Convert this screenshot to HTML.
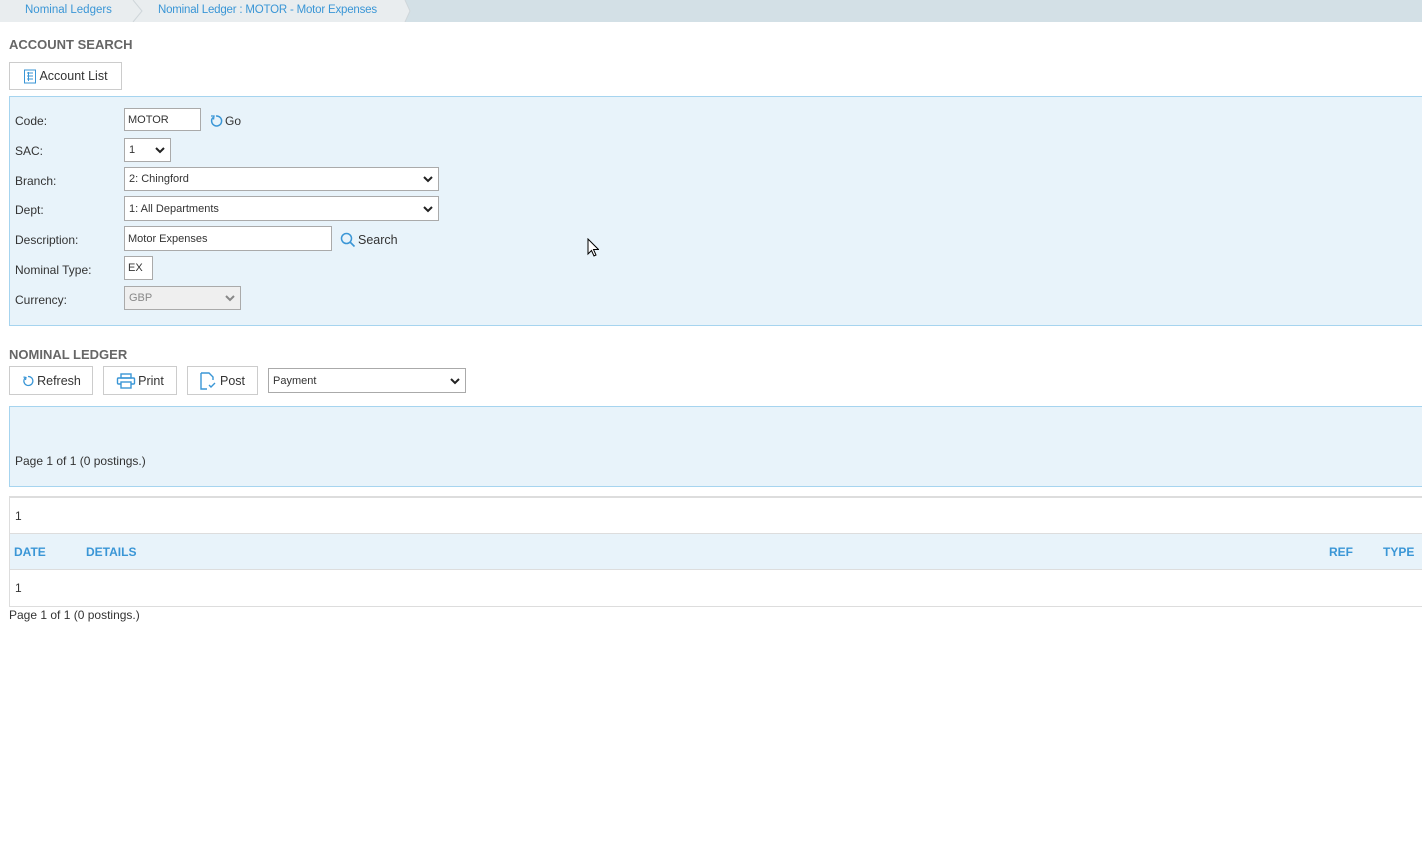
<!DOCTYPE html>
<html><head><style>
*{box-sizing:border-box;margin:0;padding:0}
body{width:1422px;height:851px;background:#fff;font-family:"Liberation Sans",sans-serif;color:#333;position:relative;overflow:hidden}
.a{position:absolute}
.lbl{font-size:12px;color:#333;left:15px}
.inp{position:absolute;background:#fff;border:1px solid #aaa;font-size:11px;padding-left:3px;display:flex;align-items:center;color:#333}
.sel{padding-left:4px}
.sel svg{position:absolute;right:5px;top:50%;margin-top:-4px}
.btn{position:absolute;background:#fff;border:1px solid #ccc;font-size:12.5px;color:#333;display:flex;align-items:center;justify-content:center;gap:2px}
.h{font-size:13px;font-weight:bold;color:#666;left:9px}
</style></head><body>
<div class="a" style="left:0;top:0;width:1422px;height:22px;background:#d3e0e6"></div>
<div class="a" style="left:0;top:0;width:405px;height:22px;background:#e9edef"></div>
<svg class="a" style="left:130px;top:0" width="16" height="22"><path d="M3 0 L12 11 L3 22" fill="none" stroke="#cfd6da" stroke-width="1"/></svg>
<svg class="a" style="left:398px;top:0" width="14" height="22"><path d="M0 0 L7 0 L12 11 L7 22 L0 22Z" fill="#e9edef"/><path d="M7 0 L12 11 L7 22" fill="none" stroke="#cfd6da"/></svg>
<div class="a" style="left:25px;top:4px;font-size:11.5px;color:#3a96d6">Nominal Ledgers</div>
<div class="a" style="left:158px;top:4px;font-size:11.5px;letter-spacing:-0.2px;color:#3a96d6">Nominal Ledger : MOTOR - Motor Expenses</div>

<div class="a h" style="top:37px">ACCOUNT SEARCH</div>
<div class="btn" style="left:9px;top:62px;width:113px;height:28px"><svg width="14" height="15" viewBox="0 0 14 15"><rect x="1.5" y="1" width="11" height="13" fill="#fff" stroke="#3a96d6"/><path d="M4 4h6M4 7h6M4 10h6M5.5 3v9" stroke="#3a96d6" fill="none"/></svg> Account List</div>

<div class="a" style="left:9px;top:96px;width:1420px;height:230px;background:#e8f3fa;border:1px solid #a6d4ef"></div>
<div class="a lbl" style="top:114px">Code:</div>
<div class="a lbl" style="top:144px">SAC:</div>
<div class="a lbl" style="top:174px">Branch:</div>
<div class="a lbl" style="top:203px">Dept:</div>
<div class="a lbl" style="top:233px">Description:</div>
<div class="a lbl" style="top:263px">Nominal Type:</div>
<div class="a lbl" style="top:293px">Currency:</div>
<div class="inp" style="left:124px;top:108px;width:77px;height:23px">MOTOR</div>
<svg class="a" style="left:209px;top:114px" width="14" height="14" viewBox="0 0 14 14"><path d="M4 3.5 A5 5 0 1 0 7 2" fill="none" stroke="#3a96d6" stroke-width="1.5"/><path d="M2 2 L5 2 L4.5 5.5" fill="none" stroke="#3a96d6" stroke-width="1.3"/></svg>
<div class="a" style="left:225px;top:114px;font-size:12px">Go</div>
<div class="inp sel" style="left:124px;top:138px;width:47px;height:24px">1<svg width="10" height="8"><path d="M1 2l4 4 4-4" stroke="#222" stroke-width="2" fill="none"/></svg></div>
<div class="inp sel" style="left:124px;top:167px;width:315px;height:24px">2: Chingford<svg width="10" height="8"><path d="M1 2l4 4 4-4" stroke="#222" stroke-width="2" fill="none"/></svg></div>
<div class="inp sel" style="left:124px;top:196px;width:315px;height:25px">1: All Departments<svg width="10" height="8"><path d="M1 2l4 4 4-4" stroke="#222" stroke-width="2" fill="none"/></svg></div>
<div class="inp" style="left:124px;top:226px;width:208px;height:25px">Motor Expenses</div>
<svg class="a" style="left:340px;top:232px" width="16" height="16"><circle cx="6.5" cy="6.5" r="5" fill="none" stroke="#3a96d6" stroke-width="1.5"/><path d="M10 10l4.5 4.5" stroke="#3a96d6" stroke-width="1.6"/></svg>
<div class="a" style="left:358px;top:233px;font-size:12.5px">Search</div>
<div class="inp" style="left:124px;top:256px;width:29px;height:24px">EX</div>
<div class="inp sel" style="left:124px;top:286px;width:117px;height:24px;background:#efefef;color:#888">GBP<svg width="10" height="8"><path d="M1 2l4 4 4-4" stroke="#888" stroke-width="2" fill="none"/></svg></div>
<svg class="a" style="left:587px;top:238px" width="12" height="20"><path d="M1 1v15l3.5-3.5 2.5 5.5 2-1-2.5-5.5h5z" fill="#fff" stroke="#000"/></svg>

<div class="a h" style="top:347px">NOMINAL LEDGER</div>
<div class="btn" style="left:9px;top:366px;width:84px;height:29px"><svg width="14" height="14" viewBox="0 0 14 14"><path d="M4 4 A4.5 4.5 0 1 0 7 2.5" fill="none" stroke="#3a96d6" stroke-width="1.3"/><path d="M2.5 3L5 3.5 4.5 6" fill="none" stroke="#3a96d6" stroke-width="1.2"/></svg>Refresh</div>
<div class="btn" style="left:103px;top:366px;width:74px;height:29px"><svg width="20" height="16" viewBox="0 0 20 16"><rect x="5" y="1" width="10" height="4" fill="none" stroke="#3a96d6" stroke-width="1.4"/><rect x="1.5" y="5" width="17" height="6" rx="1" fill="none" stroke="#3a96d6" stroke-width="1.4"/><rect x="5" y="9" width="10" height="6" fill="#fff" stroke="#3a96d6" stroke-width="1.4"/></svg>Print</div>
<div class="btn" style="left:187px;top:366px;width:71px;height:29px;gap:4px"><svg width="16" height="18" viewBox="0 0 16 18"><path d="M1 1h8l4 4v3M1 1v16h6" fill="none" stroke="#3a96d6" stroke-width="1.4"/><path d="M9 13l2 2 4-4" fill="none" stroke="#3a96d6" stroke-width="1.4"/></svg>Post</div>
<div class="inp sel" style="left:268px;top:368px;width:198px;height:25px">Payment<svg width="10" height="8"><path d="M1 2l4 4 4-4" stroke="#222" stroke-width="2" fill="none"/></svg></div>

<div class="a" style="left:9px;top:406px;width:1420px;height:81px;background:#e8f3fa;border:1px solid #a6d4ef"></div>
<div class="a" style="left:15px;top:454px;font-size:12px">Page 1 of 1 (0 postings.)</div>

<div class="a" style="left:9px;top:496px;width:1420px;height:111px;border:1px solid #ddd;border-top:2px solid #ddd"></div>
<div class="a" style="left:10px;top:533px;width:1412px;height:37px;background:#e8f3fa;border-top:1px solid #ddd;border-bottom:1px solid #ddd"></div>
<div class="a" style="left:15px;top:509px;font-size:12px">1</div>
<div class="a" style="left:14px;top:545px;font-size:12px;font-weight:bold;color:#3a96d6">DATE</div>
<div class="a" style="left:86px;top:545px;font-size:12px;font-weight:bold;color:#3a96d6">DETAILS</div>
<div class="a" style="left:1329px;top:545px;font-size:12px;font-weight:bold;color:#3a96d6">REF</div>
<div class="a" style="left:1383px;top:545px;font-size:12px;font-weight:bold;color:#3a96d6">TYPE</div>
<div class="a" style="left:15px;top:581px;font-size:12px">1</div>
<div class="a" style="left:9px;top:608px;font-size:12px">Page 1 of 1 (0 postings.)</div>
</body></html>
